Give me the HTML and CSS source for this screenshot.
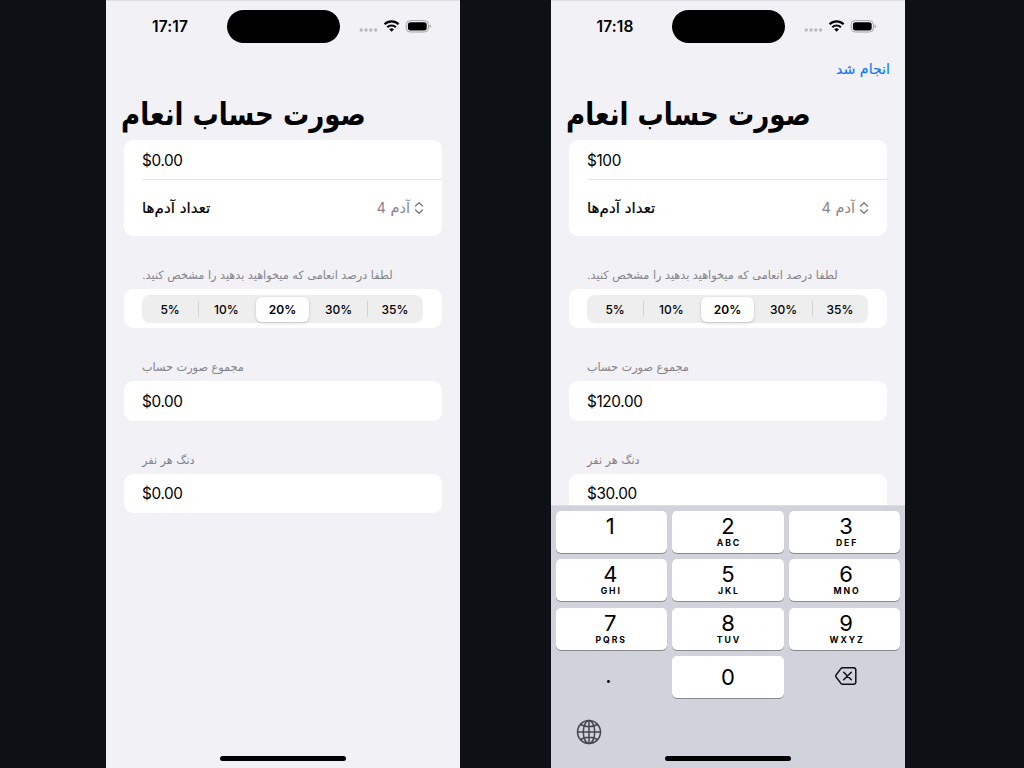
FILE: index.html
```
<!DOCTYPE html>
<html lang="fa">
<head>
<meta charset="utf-8">
<title>صورت حساب انعام</title>
<link rel="stylesheet" href="styles.css">
</head>
<body>
<svg class="defs" width="0" height="0">
  <symbol id="status" viewBox="0 0 72 16">
    <g fill="#b9b9be"><circle cx="2.200" cy="12" r="1.7"/><circle cx="7" cy="12" r="1.7"/><circle cx="11.800" cy="12" r="1.7"/><circle cx="16.600" cy="12" r="1.7"/></g>
    <g fill="none" stroke="#000" stroke-width="2.2"><path d="M25.6 6.300a10 10 0 0 1 14 0"/><path d="M28.300 9.200a6.3 6.3 0 0 1 8.6 0"/></g>
    <path d="M30.200 11.200a3.6 3.6 0 0 1 4.8 0L32.600 13.700z"/>
    <rect x="47.200" y="2.600" width="22.200" height="11.400" rx="4" fill="none" stroke="#a3a3a7"/>
    <rect x="48.900" y="4.200" width="18.800" height="8.200" rx="2.600"/>
    <path d="M70.600 6.600c1.800 .7 1.800 2.800 0 3.500z" fill="#a3a3a7"/>
  </symbol>
  <symbol id="updown" viewBox="0 0 10 14"><path d="M1.500 5 5 1.700l3.500 3.300M1.500 9 5 12.300l3.500-3.300" fill="none" stroke="#78787c" stroke-width="1.300" stroke-linecap="round" stroke-linejoin="round"/></symbol>
</svg>
<main class="stage">
  <section class="phone">
    <header class="status"><span class="time">17:17</span><span class="island"></span><svg class="signals"><use href="#status"/></svg></header>
    <div class="toolbar"></div>
    <h1 class="title"><span class="fit fit-title">صورت حساب انعام</span></h1>
    <div class="form">
      <div class="card">
        <div class="row">$0.00</div>
        <div class="row people"><span class="fit fit-people" dir="rtl">تعداد آدم‌ها</span><span class="picker"><span class="fit fit-four" dir="rtl">آدم <span class="count">4</span></span><svg class="updown"><use href="#updown"/></svg></span></div>
      </div>
      <p class="label"><span class="fit fit-tip" dir="rtl">لطفا درصد انعامی که میخواهید بدهید را مشخص کنید.</span></p>
      <div class="card tips"><div class="segments"><span>5%</span><span class="bar">10%</span><span class="on">20%</span><span>30%</span><span class="bar">35%</span></div></div>
      <p class="label"><span class="fit fit-total" dir="rtl">مجموع صورت حساب</span></p>
      <div class="card"><div class="row">$0.00</div></div>
      <p class="label"><span class="fit fit-share" dir="rtl">دنگ هر نفر</span></p>
      <div class="card"><div class="row">$0.00</div></div>
    </div>
    <i class="home"></i>
  </section>
  <section class="phone">
    <header class="status"><span class="time">17:18</span><span class="island"></span><svg class="signals"><use href="#status"/></svg></header>
    <div class="toolbar"><span class="fit fit-done" dir="rtl">انجام شد</span></div>
    <h1 class="title"><span class="fit fit-title">صورت حساب انعام</span></h1>
    <div class="form">
      <div class="card">
        <div class="row">$100</div>
        <div class="row people"><span class="fit fit-people" dir="rtl">تعداد آدم‌ها</span><span class="picker"><span class="fit fit-four" dir="rtl">آدم <span class="count">4</span></span><svg class="updown"><use href="#updown"/></svg></span></div>
      </div>
      <p class="label"><span class="fit fit-tip" dir="rtl">لطفا درصد انعامی که میخواهید بدهید را مشخص کنید.</span></p>
      <div class="card tips"><div class="segments"><span>5%</span><span class="bar">10%</span><span class="on">20%</span><span>30%</span><span class="bar">35%</span></div></div>
      <p class="label"><span class="fit fit-total" dir="rtl">مجموع صورت حساب</span></p>
      <div class="card"><div class="row">$120.00</div></div>
      <p class="label"><span class="fit fit-share" dir="rtl">دنگ هر نفر</span></p>
      <div class="card"><div class="row">$30.00</div></div>
    </div>
    <div class="keyboard">
      <div class="keys">
        <div class="key"><b>1</b></div><div class="key"><b>2</b><small>ABC</small></div><div class="key"><b>3</b><small>DEF</small></div>
        <div class="key"><b>4</b><small>GHI</small></div><div class="key"><b>5</b><small>JKL</small></div><div class="key"><b>6</b><small>MNO</small></div>
        <div class="key"><b>7</b><small>PQRS</small></div><div class="key"><b>8</b><small>TUV</small></div><div class="key"><b>9</b><small>WXYZ</small></div>
        <div class="key bare dot"><b>.</b></div><div class="key zero"><b>0</b></div>
        <div class="key bare"><svg class="delete" viewBox="0 0 24 20"><g fill="none" stroke="#111" stroke-width="1.500" stroke-linecap="round" stroke-linejoin="round"><path d="M8.600 1.800H19.500a2.300 2.300 0 0 1 2.300 2.300v11.800a2.300 2.300 0 0 1-2.300 2.300H8.600q-1 0-1.700-.8L2.200 11.200q-1-1.200 0-2.400L6.900 2.600q.7-.8 1.700-.8z"/><path d="m9.700 6.200 7.600 7.600m0-7.600L9.700 13.800"/></g></svg></div>
      </div>
      <svg class="globe" viewBox="0 0 26 26"><g fill="none" stroke="#43464b" stroke-width="1.500"><circle cx="13" cy="13" r="11.500"/><ellipse cx="13" cy="13" rx="5.700" ry="11.500"/><path d="M13 1.500v23M1.500 13h23M4.500 5.500q8.500 4.500 17 0M4.500 20.500q8.500-4.500 17 0"/></g></svg>
    </div>
    <i class="home"></i>
  </section>
</main>
</body>
</html>
```
FILE: styles.css
```
* { box-sizing: border-box; }
body { margin: 0; background: #0d1116; font-family: Inter, "DejaVu Sans", sans-serif; color: #000; }
.defs { position: absolute; }
.stage { display: flex; gap: 91px; padding-left: 106px; height: 768px; overflow: hidden; }
.phone { position: relative; width: 354px; height: 768px; overflow: hidden; background: #f2f1f6; border-top: 1px solid #dedee2; }
.status { display: grid; grid-template-columns: 120px 114px 1fr; height: 51px; padding-top: 9px; }
.time { padding-left: 8px; text-align: center; font-size: 15.500px; font-weight: 600; line-height: 34px; letter-spacing: .1px; }
.island { height: 33px; margin: 0 .5px; border-radius: 17px; background: #000; }
.signals { width: 72px; height: 16px; margin: 8px 0 0 19px; }
.toolbar { height: 34px; padding: 0 15px 1px 0; display: flex; align-items: center; justify-content: flex-end; color: #0a7aff; font-size: 14.200px; -webkit-text-stroke: .15px; }
.fit { display: inline-block; white-space: nowrap; transform-origin: left center; font-family: "DejaVu Sans", sans-serif; }
.title { margin: 0; height: 53px; padding-left: 14.500px; font-size: 31px; line-height: 56px; font-weight: 700; direction: ltr; }
.fit-title { transform: scaleX(.842); }
.fit-people { transform: scaleX(1.010); -webkit-text-stroke: .2px; }
.count { font-family: Inter, sans-serif; }
.form { padding: 0 18px; margin-top: 1px; }
.card { background: #fff; border-radius: 9px; }
.row { height: 39.500px; padding: 1px 18px 0; display: flex; align-items: center; font-size: 15.300px; letter-spacing: -.35px; }
.people { height: 57px; margin: -.5px 0 0 18px; padding: 0 18px 1px 0; justify-content: space-between; border-top: 1px solid #e6e6e8; font-size: 15px; letter-spacing: 0; }
.picker { display: flex; align-items: center; gap: 4px; color: #85858a; font-size: 14.500px; }
.updown { width: 10px; height: 14px; }
.label { margin: 0; height: 53px; padding: 30px 18px 0; color: #838388; font-size: 11.250px; line-height: 19px; }
.fit-share { transform: translateY(-.5px); }
.tips { height: 39px; padding: 5.500px 18px; }
.segments { display: grid; grid-template-columns: repeat(5, 1fr); width: 281px; height: 28px; border-radius: 8px; background: #eee; font-size: 12px; font-weight: 500; line-height: 29px; text-align: center; }
.bar { background: linear-gradient(#d3d3d5, #d3d3d5) left 6px / 1px 16px no-repeat; }
.on { margin: 2px; line-height: 25px; border-radius: 6px; background: #fff; font-weight: 600; box-shadow: 0 1px 3px #0003; }
.home { position: absolute; left: 114px; top: 755px; width: 126px; height: 5px; border-radius: 3px; background: #000; }
.keyboard { position: absolute; left: 0; right: 0; top: 504px; bottom: 0; padding: 5px 4.500px; background: #d0d3db; border-top: 1px solid #dddee3; }
.keys { display: grid; grid-template-columns: repeat(3, 1fr); grid-auto-rows: 42px; gap: 6.400px 5px; }
.key { display: flex; flex-direction: column; align-items: center; background: #fff; border-radius: 5px; box-shadow: 0 1px #898b90; }
.key b { font-size: 22px; line-height: 30px; font-weight: 400; }
.key small { margin-top: -2px; font-size: 8.700px; line-height: 8px; font-weight: 700; letter-spacing: 1.900px; padding-left: 1.900px; }
.key:nth-child(3n + 1) { padding-right: 2px; }
.key:nth-child(3n) { padding-left: 3px; }
.key.bare { background: none; box-shadow: none; justify-content: center; }
.key.dot { padding: 0 6px 5px 0; }
.key.zero { justify-content: center; }
.delete { width: 24px; height: 20px; margin-bottom: 2px; }
.globe { display: block; width: 26px; height: 26px; margin: 21px 0 0 20px; }
```
